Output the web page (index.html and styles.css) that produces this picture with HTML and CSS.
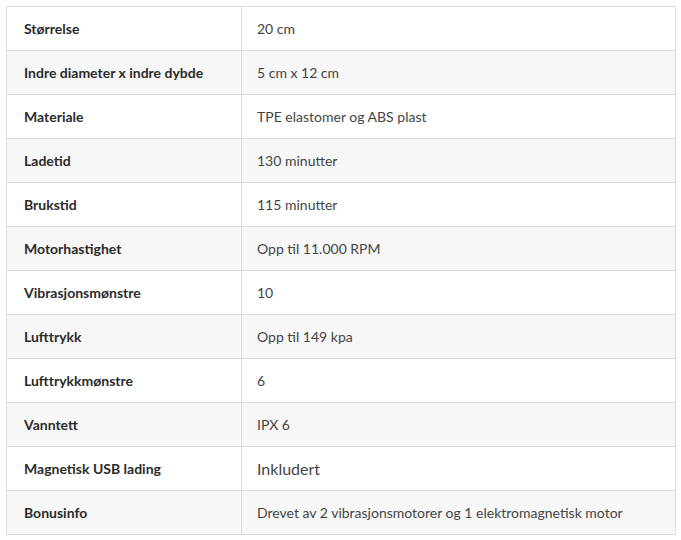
FILE: index.html
```html
<!DOCTYPE html>
<html lang="no">
<head>
<meta charset="utf-8">
<title>Spesifikasjoner</title>
<link rel="stylesheet" href="styles.css">
</head>
<body>
<table class="specs">
<tbody>
<tr><th>Størrelse</th><td>20 cm</td></tr>
<tr><th>Indre diameter x indre dybde</th><td>5 cm x 12 cm</td></tr>
<tr><th>Materiale</th><td>TPE elastomer og ABS plast</td></tr>
<tr><th>Ladetid</th><td>130 minutter</td></tr>
<tr><th>Brukstid</th><td>115 minutter</td></tr>
<tr><th>Motorhastighet</th><td>Opp til 11.000 RPM</td></tr>
<tr><th>Vibrasjonsmønstre</th><td>10</td></tr>
<tr><th>Lufttrykk</th><td>Opp til 149 kpa</td></tr>
<tr><th>Lufttrykkmønstre</th><td>6</td></tr>
<tr><th>Vanntett</th><td>IPX 6</td></tr>
<tr><th>Magnetisk USB lading</th><td class="big">Inkludert</td></tr>
<tr><th>Bonusinfo</th><td>Drevet av 2 vibrasjonsmotorer og 1 elektromagnetisk motor</td></tr>
</tbody>
</table>
</body>
</html>
```
FILE: styles.css
```css
html, body {
  margin: 0;
  padding: 0;
  background: #ffffff;
}
body {
  padding: 6px 5px 0 6px;
  font-family: Lato, "Liberation Sans", sans-serif;
  font-size: 14px;
}
.specs {
  width: 670px;
  border-collapse: collapse;
  border: 1px solid #dcdcdc;
}
.specs th, .specs td {
  border: 1px solid #dcdcdc;
  padding: 11px 16px;
  line-height: 21px;
  text-align: left;
  vertical-align: middle;
}
.specs th {
  width: 201px;
  padding-left: 17px;
  font-weight: 700;
  color: #2b2b2b;
}
.specs td {
  padding-left: 15px;
  color: #454545;
  font-weight: 400;
}
.specs td.big {
  font-size: 16px;
}
.specs tr:nth-child(even) th,
.specs tr:nth-child(even) td {
  background: #f7f7f7;
}
```
